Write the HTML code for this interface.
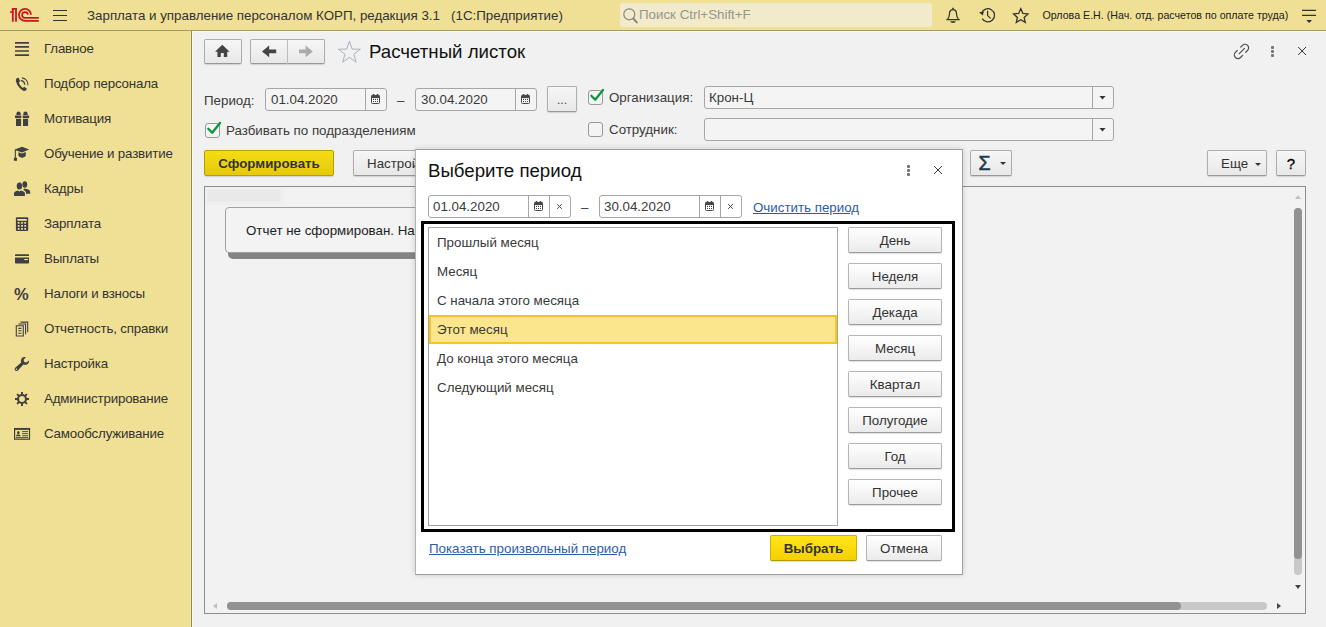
<!DOCTYPE html>
<html lang="ru"><head><meta charset="utf-8"><title>Расчетный листок</title>
<style>
*{box-sizing:border-box;margin:0;padding:0}
html,body{width:1326px;height:627px;overflow:hidden}
body{font-family:"Liberation Sans",Arial,sans-serif;font-size:13.33px;color:#3a3a3a;background:#f1f1f1;position:relative}
.abs{position:absolute}
#top{position:absolute;left:0;top:0;width:1326px;height:31px;background:#f0e095;border-bottom:1px solid #a39a62}
#side{position:absolute;left:0;top:31px;width:192px;height:596px;background:#f0e095;border-right:1px solid #8f8858;box-shadow:inset -1px 0 0 #f7e99b}
.mi{position:absolute;left:44px;font-size:13.33px;letter-spacing:-0.18px;color:#333;white-space:nowrap;line-height:16px}
.ic{position:absolute;left:14px;width:16px;height:16px}
.t{position:absolute;white-space:nowrap;line-height:16px}
.btn{position:absolute;border:1px solid #b4b4b4;border-bottom-color:#9c9c9c;border-radius:2px;background:linear-gradient(#ffffff,#ebebeb);box-shadow:0 1px 1px rgba(0,0,0,.13);text-align:center;color:#333;white-space:nowrap}
.fld{position:absolute;border:1px solid #a6a6a6;border-radius:3px;background:#fff}
.ybtn{background:linear-gradient(#ffe51a,#f5d000);border-color:#cdb000;border-bottom-color:#b39600;font-weight:bold}
.cb{position:absolute;width:15px;height:15px;border:1px solid #999;border-radius:3px;background:#fff}
a.lnk{position:absolute;color:#2b5cab;text-decoration:underline;white-space:nowrap;line-height:16px}
.dim{background:#f4f4f4}
.dimy{background:linear-gradient(#f5dc14,#e6c90c);border-color:#b89e00}
.g{background:linear-gradient(#f6f6f6,#e8e8e8);border-color:#adadad;border-bottom-color:#979797}
</style></head><body>
<div id="top">
<div class="abs" style="left:620px;top:3px;width:312px;height:24px;background:#f2ebcb;border-radius:3px"></div>
<svg class="abs" style="left:0;top:0" width="1326" height="30" viewBox="0 0 1326 30" fill="none">
<g stroke="#d0141c" stroke-width="1.8">
<path d="M12.8 8V21.8M16 8V21.8"/><path d="M11.9 8.9H16.9M10 12H13.7" stroke-width="1.7"/>
<path d="M31 14.8 A6 6 0 1 0 25 20.9 H38.8"/>
<path d="M27.9 14.8 A2.9 2.9 0 1 0 25 17.9 H38.8" stroke-width="1.7"/>
</g>
<path d="M53 10.5H67M53 15.5H67M53 20.5H67" stroke="#333" stroke-width="1.2"/>
<g stroke="#85857a"><circle cx="629.3" cy="14.3" r="5.5" stroke-width="1.2"/><path d="M633.4 18.6 L636.8 22.4" stroke-width="2" stroke-linecap="round"/></g>
<g stroke="#333" stroke-width="1.25">
<path d="M946.3 19.7 H959.7 M947.6 19.4 C949.8 16.6 949.3 14 949.7 12.2 C950.1 10.2 951.4 9.5 953 9.5 C954.6 9.5 955.9 10.2 956.3 12.2 C956.7 14 956.2 16.6 958.4 19.4"/>
<path d="M953 7.8V9.6" stroke-width="1.6"/>
<path d="M981.6 13.4 A6.6 6.6 0 1 1 982.2 18.6"/>
<path d="M987.6 10.8 V15.6 L990.6 18.4"/>
<path d="M1020.8 8.6 L1022.9 13.4 L1028 13.9 L1024.2 17.4 L1025.3 22.4 L1020.8 19.8 L1016.3 22.4 L1017.4 17.4 L1013.6 13.9 L1018.7 13.4 Z" stroke-width="1.3" stroke-linejoin="miter"/>
<path d="M1302 10.4H1316M1302 15.4H1316" stroke-width="1.2"/>
</g>
<path d="M950.2 21.2 H955.8 A2.8 1.7 0 0 1 950.2 21.2 Z" fill="#333"/>
<path d="M979 12.3 L984 11.6 L982.7 15.4 Z" fill="#333"/>
<path d="M1306.3 20 H1312 L1309.15 22.9 Z" fill="#333"/>
</svg>
<div class="t" style="left:87px;top:8px;font-size:13.33px;color:#333">Зарплата и управление персоналом КОРП, редакция 3.1 &nbsp; (1С:Предприятие)</div>
<div class="t" style="left:639px;top:7px;font-size:13.33px;color:#96968c">Поиск Ctrl+Shift+F</div>
<div class="t" style="left:1042.5px;top:7px;font-size:10.67px;color:#222">Орлова Е.Н. (Нач. отд. расчетов по оплате труда)</div>
</div>
<div id="side">
<svg class="abs" style="left:0;top:0" width="40" height="596" viewBox="0 31 40 596" fill="none">
<path d="M15 42.8H29M15 46.9H29M15 51H29M15 55.1H29" stroke="#404044" stroke-width="1.7"/>
<g>
<path d="M17.2 78 C16 78.6 15.6 80 16 81.6 C17 85.4 19.6 88.8 22.8 90.6 C24.2 91.4 25.6 91 26.4 89.8 L27 88.8 L24.2 86.8 L22.8 88 C21 86.8 19.4 84.6 18.8 82.6 L20.2 81.6 L18.6 77.8 Z" fill="#404044"/>
<path d="M20.8 80.4 C23 80.8 24.6 82.6 24.8 84.8" stroke="#404044" stroke-width="1.2"/>
<path d="M22 77.9 C25.6 78.4 28 81.4 28 85.2" stroke="#404044" stroke-width="1.2"/>
</g>
<g fill="#404044">
<path d="M15 115.6H21.3V117.9H15ZM22.7 115.6H29.1V117.9H22.7ZM16 118.7H21.1V126H16ZM23 118.7H28.1V126H23Z"/>
<path d="M16.4 115 C16 112.6 17.4 111.5 18.6 111.5 C19.8 111.5 21 112.6 20.8 115Z M23.3 115 C23 112.6 24.3 111.5 25.5 111.5 C26.7 111.5 28.1 112.6 27.7 115Z"/>
</g>
<g fill="#404044">
<path d="M14.2 149.7 L22 146.8 L29.2 149.6 L22 152.6 Z"/>
<path d="M18.4 152.2 L22 153.6 L25.8 152.1 V155.6 C25 158.4 19.2 158.4 18.4 155.6 Z"/>
<path d="M14.8 150H15.9V158H14.8Z"/><path d="M13.9 157.8H17V160.8H13.9Z"/>
</g>
<g fill="#404044">
<ellipse cx="24.8" cy="184.5" rx="2.4" ry="3.3"/>
<path d="M24.2 188.6 C27.6 189 30.2 190 30.2 192 V193.7 H25.9 V192.6 C25.9 191.2 24.6 190.4 23.4 190 Z"/>
<ellipse cx="19.4" cy="186.1" rx="2.7" ry="3.5"/>
<path d="M14 196.1 V193.4 C14 191.8 16.2 191 17.8 190.6 L19.4 191.6 L21 190.6 C22.6 191 24.9 191.8 24.9 193.4 V196.1 Z"/>
</g>
<g>
<rect x="15.9" y="217.2" width="12.3" height="13.7" rx="1" fill="#404044"/>
<path d="M17.3 219H26.8V220.8H17.3Z" fill="#f0e095"/>
<path d="M17.8 222.9H19.6M21.1 222.9H22.9M24.3 222.9H26.1M17.8 225.9H19.6M21.1 225.9H22.9M24.3 225.9H26.1M17.8 228.9H19.6M21.1 228.9H22.9M24.3 228.9H26.1" stroke="#f0e095" stroke-width="1.7"/>
</g>
<g fill="#404044">
<path d="M15 256 V255.2 C15 254.6 15.4 254.2 16 254.2 H28 C28.6 254.2 29 254.6 29 255.2 V256 Z"/>
<path d="M15 257.6 H29 V262.6 C29 263.2 28.6 263.6 28 263.6 H16 C15.4 263.6 15 263.2 15 262.6 Z"/>
<path d="M24.2 259H28V260.1H24.2Z" fill="#f0e095"/>
</g>
<g stroke="#404044" stroke-width="1.1">
<path d="M16.3 325.8H23.3V336H16.3Z"/>
<path d="M18.3 328.4H21.5M18.3 330.8H21.5M18.3 333.2H21.5"/>
<path d="M18.4 324H25.6V334.2M20.5 322.1H27.7V332.2"/>
</g>
<g>
<path d="M25.9 357.2 C23.4 356.4 20.8 358.2 20.9 361 C20.9 361.6 21 362 21.2 362.4 L15.2 367.8 C14.4 368.6 14.4 369.8 15.2 370.5 C16 371.3 17.1 371.3 17.9 370.5 L23.4 364.6 C26.4 365.6 29.4 363.6 29.1 360.4 L26.4 362.6 L24.2 362 L23.6 359.8 Z" fill="#404044"/>
<circle cx="16.4" cy="369.3" r="0.8" fill="#f0e095"/>
</g>
<g>
<circle cx="22" cy="399" r="4" stroke="#404044" stroke-width="2.1"/>
<path d="M22 392V394.6M22 403.4V406M15 399H17.6M26.4 399H29M17.05 394.05L18.9 395.9M25.1 402.1L26.95 403.95M26.95 394.05L25.1 395.9M18.9 402.1L17.05 403.95" stroke="#404044" stroke-width="1.9"/>
</g>
<g>
<rect x="14.6" y="428.8" width="14.9" height="10.4" stroke="#404044" stroke-width="1.2"/>
<path d="M14 428.9H30.1" stroke="#404044" stroke-width="1.9"/>
<ellipse cx="18.3" cy="432.6" rx="1.3" ry="1.7" fill="#404044"/>
<path d="M16 436.3 C16 434.9 17 434.5 18.3 434.5 C19.6 434.5 20.6 434.9 20.6 436.3Z" fill="#404044"/>
<path d="M22 431.6H28M22 433.7H28M22 435.8H28M16 437.6H28" stroke="#404044" stroke-width="0.9"/>
</g>
</svg>
<div class="t" style="left:14px;top:254px;font-size:16.5px;font-weight:bold;color:#404044;line-height:18px">%</div>
<div class="mi" style="top:10px">Главное</div>
<div class="mi" style="top:45px">Подбор персонала</div>
<div class="mi" style="top:80px">Мотивация</div>
<div class="mi" style="top:115px">Обучение и развитие</div>
<div class="mi" style="top:150px">Кадры</div>
<div class="mi" style="top:185px">Зарплата</div>
<div class="mi" style="top:220px">Выплаты</div>
<div class="mi" style="top:255px">Налоги и взносы</div>
<div class="mi" style="top:290px">Отчетность, справки</div>
<div class="mi" style="top:325px">Настройка</div>
<div class="mi" style="top:360px">Администрирование</div>
<div class="mi" style="top:395px">Самообслуживание</div>
</div>
<div id="main">
<div class="abs" style="left:192px;top:31px;width:1134px;height:1px;background:#fafafc"></div><div class="abs" style="left:192px;top:31px;width:1px;height:596px;background:#fafafc"></div>
<div class="btn g" style="left:204px;top:39px;width:38px;height:25px"></div>
<div class="btn g" style="left:250px;top:39px;width:75px;height:25px"></div>
<div class="abs" style="left:287px;top:40px;width:1px;height:24px;background:#bdbdbd"></div>
<svg class="abs" style="left:192px;top:31px" width="1134" height="40" viewBox="192 31 1134 40" fill="none">
<path d="M222.3 44.8 L215 51.8 H217.4 V57 H220.8 V53 H223.8 V57 H227.2 V51.8 H229.6 Z" fill="#444"/>
<path d="M262 51.4 L269.2 45.6 V49.5 H276.2 V53.3 H269.2 V57.2 Z" fill="#444"/>
<path d="M312.8 51.4 L305.6 45.6 V49.5 H299 V53.3 H305.6 V57.2 Z" fill="#ababab"/>
<path d="M349.4 41.2 L352.1 49.1 L360.4 49.2 L353.8 54.2 L356.2 62.2 L349.4 57.4 L342.6 62.2 L345.0 54.2 L338.4 49.2 L346.7 49.1 Z" stroke="#aab2ba" stroke-width="1"/>
</svg>
<div class="t" style="left:369px;top:41px;font-size:18.67px;line-height:22px;color:#111">Расчетный листок</div>
<svg class="abs" style="left:1220px;top:34px" width="106" height="36" viewBox="1220 34 106 36" fill="none">
<g transform="translate(1241.5 51.4) rotate(-45)" stroke="#505050" stroke-width="1.25" stroke-linecap="round">
<path d="M2.6 -3.6 H5 A3.6 3.6 0 0 1 5 3.6 H2.4"/>
<path d="M-2.4 -3.6 H-5 A3.6 3.6 0 0 0 -5 3.6 H-2"/>
<path d="M-3.2 0 H4.2"/>
</g>
<g fill="#757575"><rect x="1271" y="46" width="3" height="3" rx="1.1"/><rect x="1271" y="50" width="3" height="3" rx="1.1"/><rect x="1271" y="54" width="3" height="3" rx="1.1"/></g>
<path d="M1298.2 47 L1306 55 M1306 47 L1298.2 55" stroke="#333" stroke-width="1"/>
</svg>

<div class="t" style="left:204px;top:93px">Период:</div>
<div class="fld dim" style="left:265px;top:88px;width:122px;height:23px"></div>
<div class="abs" style="left:365px;top:89px;width:1px;height:21px;background:#a6a6a6"></div>
<div class="t" style="left:271px;top:92px">01.04.2020</div>
<svg class="abs" style="left:371px;top:94px" width="9" height="10" viewBox="0 0 9 10"><rect x="0.5" y="1.5" width="8" height="8" rx="1" fill="#f4f4f4" stroke="#484848"/><path d="M0.3 1.3H8.7V4H0.3Z" fill="#484848"/><path d="M2.5 0V1.6M6.5 0V1.6" stroke="#484848" stroke-width="1.6"/><path d="M2 5.4H3M4 5.4H5M6 5.4H7M2 7.5H3M4 7.5H5M6 7.5H7" stroke="#484848" stroke-width="1.1"/></svg>
<div class="t" style="left:397px;top:93px">–</div>
<div class="fld dim" style="left:415px;top:88px;width:122px;height:23px"></div>
<div class="abs" style="left:515px;top:89px;width:1px;height:21px;background:#a6a6a6"></div>
<div class="t" style="left:421px;top:92px">30.04.2020</div>
<svg class="abs" style="left:521px;top:94px" width="9" height="10" viewBox="0 0 9 10"><rect x="0.5" y="1.5" width="8" height="8" rx="1" fill="#f4f4f4" stroke="#484848"/><path d="M0.3 1.3H8.7V4H0.3Z" fill="#484848"/><path d="M2.5 0V1.6M6.5 0V1.6" stroke="#484848" stroke-width="1.6"/><path d="M2 5.4H3M4 5.4H5M6 5.4H7M2 7.5H3M4 7.5H5M6 7.5H7" stroke="#484848" stroke-width="1.1"/></svg>
<div class="btn g" style="left:547px;top:86px;width:30px;height:26px;line-height:26px;font-size:12px;color:#444">...</div>
<div class="cb dim" style="left:588px;top:90px"></div>
<svg class="abs" style="left:588px;top:86px" width="18" height="18" viewBox="588 86 18 18"><path d="M591.3 95.8 L595.2 99.8 L603 90" fill="none" stroke="#0a983e" stroke-width="2.3" stroke-linecap="round" stroke-linejoin="round"/></svg>
<div class="t" style="left:609px;top:90px">Организация:</div>
<div class="fld dim" style="left:704px;top:86px;width:410px;height:23px"></div>
<div class="abs" style="left:1092px;top:87px;width:1px;height:21px;background:#a6a6a6"></div>
<div class="t" style="left:709px;top:90px">Крон-Ц</div>
<svg class="abs" style="left:1099px;top:96px" width="7" height="4" viewBox="0 0 7 4"><path d="M0.4 0 H6.6 L3.5 3.6Z" fill="#333"/></svg>

<div class="cb dim" style="left:205px;top:123px"></div>
<svg class="abs" style="left:205px;top:119px" width="18" height="18" viewBox="205 119 18 18"><path d="M208.3 128.8 L212.2 132.8 L220 123" fill="none" stroke="#0a983e" stroke-width="2.3" stroke-linecap="round" stroke-linejoin="round"/></svg>
<div class="t" style="left:226px;top:123px">Разбивать по подразделениям</div>
<div class="cb dim" style="left:588px;top:122px"></div>
<div class="t" style="left:609px;top:122px">Сотрудник:</div>
<div class="fld dim" style="left:704px;top:118px;width:410px;height:23px"></div>
<div class="abs" style="left:1092px;top:119px;width:1px;height:21px;background:#a6a6a6"></div>
<svg class="abs" style="left:1099px;top:128px" width="7" height="4" viewBox="0 0 7 4"><path d="M0.4 0 H6.6 L3.5 3.6Z" fill="#333"/></svg>

<div class="btn ybtn dimy" style="left:204px;top:150px;width:130px;height:26px;line-height:26px">Сформировать</div>
<div class="btn g" style="left:353px;top:150px;width:110px;height:26px;line-height:26px;text-align:left;padding-left:13px">Настройки...</div>
<div class="btn g" style="left:970px;top:150px;width:42px;height:26px"></div>
<div class="t" style="left:978.4px;top:151px;font-size:19.5px;line-height:24px;color:#1f3a4d;-webkit-text-stroke:0.6px #1f3a4d">Σ</div>
<svg class="abs" style="left:1000px;top:162px" width="6" height="3" viewBox="0 0 6 3"><path d="M0 0H6L3 3Z" fill="#333"/></svg>
<div class="btn g" style="left:1207px;top:150px;width:60px;height:26px;line-height:26px;text-align:left;padding-left:13px">Еще</div>
<svg class="abs" style="left:1255px;top:163px" width="6" height="3" viewBox="0 0 6 3"><path d="M0 0H6L3 3Z" fill="#333"/></svg>
<div class="btn g" style="left:1276px;top:150px;width:30px;height:26px;line-height:26px;font-size:15px;color:#000;-webkit-text-stroke:0.3px #000">?</div>

<div class="abs" style="left:204px;top:186px;width:1102px;height:428px;border:1px solid #8e8e8e;background:#f2f2f2"></div>
<div class="abs" style="left:205px;top:187px;width:79px;height:18px;background:#efefef"></div>
<div class="abs" style="left:207px;top:189px;width:74px;height:13px;background:#e9e9e9;border:1px solid #ececec"></div>
<div class="abs" style="left:228px;top:248px;width:702px;height:11px;background:#848484;border-radius:0 0 4px 5px"></div>
<div class="abs" style="left:225px;top:207px;width:702px;height:46px;border:1px solid #a0a0a0;border-radius:4px;background:#f3f3f3"></div>
<div class="t" style="left:246px;top:223px;color:#222">Отчет не сформирован. Нажмите "Сформировать" для получения отчета.</div>

<svg class="abs" style="left:1295px;top:195px" width="6" height="4" viewBox="0 0 6 4"><path d="M0 4H6L3 0Z" fill="#c0c0c0"/></svg>
<div class="abs" style="left:1294px;top:208px;width:8px;height:367px;background:#c8c8c8;border-radius:4px"></div>
<div class="abs" style="left:1294px;top:208px;width:8px;height:351px;background:#929292;border-radius:4px"></div>
<svg class="abs" style="left:1295px;top:585px" width="6" height="4" viewBox="0 0 6 4"><path d="M0 0H6L3 4Z" fill="#444"/></svg>
<svg class="abs" style="left:213px;top:603px" width="4" height="6" viewBox="0 0 4 6"><path d="M4 0V6L0 3Z" fill="#c0c0c0"/></svg>
<div class="abs" style="left:227px;top:602px;width:1040px;height:8px;background:#c8c8c8;border-radius:4px"></div>
<div class="abs" style="left:227px;top:602px;width:954px;height:8px;background:#929292;border-radius:4px"></div>
<svg class="abs" style="left:1277px;top:603px" width="4" height="6" viewBox="0 0 4 6"><path d="M0 0V6L4 3Z" fill="#444"/></svg>
</div>
<div id="dlg">
<div class="abs" style="left:415px;top:149px;width:548px;height:426px;background:#fff;border:1px solid #9e9e9e;border-left-color:#b4b4b4;box-shadow:0 0 6px rgba(0,0,0,0.16)"></div>
<div class="t" style="left:428px;top:160px;font-size:18.67px;line-height:22px;color:#111">Выберите период</div>
<svg class="abs" style="left:906px;top:164px" width="5" height="13" viewBox="906 164 5 13" fill="#707070"><rect x="907" y="165" width="3" height="3" rx="1.1"/><rect x="907" y="169" width="3" height="3" rx="1.1"/><rect x="907" y="173" width="3" height="3" rx="1.1"/></svg>
<svg class="abs" style="left:933px;top:165px" width="10" height="10" viewBox="0 0 10 10"><path d="M1.1 1.1L8.9 8.9M8.9 1.1L1.1 8.9" stroke="#222" stroke-width="0.9"/></svg>
<div class="fld" style="left:428px;top:195px;width:143px;height:23px"></div>
<div class="abs" style="left:528px;top:196px;width:1px;height:21px;background:#a6a6a6"></div>
<div class="abs" style="left:549px;top:196px;width:1px;height:21px;background:#a6a6a6"></div>
<div class="t" style="left:433px;top:199px">01.04.2020</div>
<svg class="abs" style="left:534px;top:201px" width="9" height="10" viewBox="0 0 9 10"><rect x="0.5" y="1.5" width="8" height="8" rx="1" fill="#fff" stroke="#484848"/><path d="M0.3 1.3H8.7V4H0.3Z" fill="#484848"/><path d="M2.5 0V1.6M6.5 0V1.6" stroke="#484848" stroke-width="1.6"/><path d="M2 5.4H3M4 5.4H5M6 5.4H7M2 7.5H3M4 7.5H5M6 7.5H7" stroke="#484848" stroke-width="1.1"/></svg>
<svg class="abs" style="left:557px;top:204px" width="5" height="5" viewBox="0 0 5 5"><path d="M0.2 0.2L4.8 4.8M4.8 0.2L0.2 4.8" stroke="#444" stroke-width="1"/></svg>
<div class="t" style="left:581px;top:200px">–</div>
<div class="fld" style="left:599px;top:195px;width:143px;height:23px"></div>
<div class="abs" style="left:699px;top:196px;width:1px;height:21px;background:#a6a6a6"></div>
<div class="abs" style="left:720px;top:196px;width:1px;height:21px;background:#a6a6a6"></div>
<div class="t" style="left:604px;top:199px">30.04.2020</div>
<svg class="abs" style="left:705px;top:201px" width="9" height="10" viewBox="0 0 9 10"><rect x="0.5" y="1.5" width="8" height="8" rx="1" fill="#fff" stroke="#484848"/><path d="M0.3 1.3H8.7V4H0.3Z" fill="#484848"/><path d="M2.5 0V1.6M6.5 0V1.6" stroke="#484848" stroke-width="1.6"/><path d="M2 5.4H3M4 5.4H5M6 5.4H7M2 7.5H3M4 7.5H5M6 7.5H7" stroke="#484848" stroke-width="1.1"/></svg>
<svg class="abs" style="left:728px;top:204px" width="5" height="5" viewBox="0 0 5 5"><path d="M0.2 0.2L4.8 4.8M4.8 0.2L0.2 4.8" stroke="#444" stroke-width="1"/></svg>
<a class="lnk" style="left:753px;top:200px">Очистить период</a>
<div class="abs" style="left:421px;top:221px;width:534px;height:311px;border:3px solid #000"></div>
<div class="abs" style="left:428px;top:227px;width:410px;height:299px;border:1px solid #a6a6a6;background:#fff"></div>
<div class="t" style="left:437px;top:235px">Прошлый месяц</div>
<div class="t" style="left:437px;top:264px">Месяц</div>
<div class="t" style="left:437px;top:293px">С начала этого месяца</div>
<div class="abs" style="left:429px;top:315px;width:408px;height:29px;background:#fce68d;border:2px solid #f8c51f"></div>
<div class="t" style="left:437px;top:322px">Этот месяц</div>
<div class="t" style="left:437px;top:351px">До конца этого месяца</div>
<div class="t" style="left:437px;top:380px">Следующий месяц</div>
<div class="btn" style="left:848px;top:227px;width:94px;height:26px;line-height:26px">День</div>
<div class="btn" style="left:848px;top:263px;width:94px;height:26px;line-height:26px">Неделя</div>
<div class="btn" style="left:848px;top:299px;width:94px;height:26px;line-height:26px">Декада</div>
<div class="btn" style="left:848px;top:335px;width:94px;height:26px;line-height:26px">Месяц</div>
<div class="btn" style="left:848px;top:371px;width:94px;height:26px;line-height:26px">Квартал</div>
<div class="btn" style="left:848px;top:407px;width:94px;height:26px;line-height:26px">Полугодие</div>
<div class="btn" style="left:848px;top:443px;width:94px;height:26px;line-height:26px">Год</div>
<div class="btn" style="left:848px;top:479px;width:94px;height:26px;line-height:26px">Прочее</div>
<a class="lnk" style="left:429px;top:541px">Показать произвольный период</a>
<div class="btn ybtn" style="left:770px;top:535px;width:87px;height:26px;line-height:26px">Выбрать</div>
<div class="btn" style="left:866px;top:535px;width:76px;height:26px;line-height:26px">Отмена</div>
</div>
</body></html>
